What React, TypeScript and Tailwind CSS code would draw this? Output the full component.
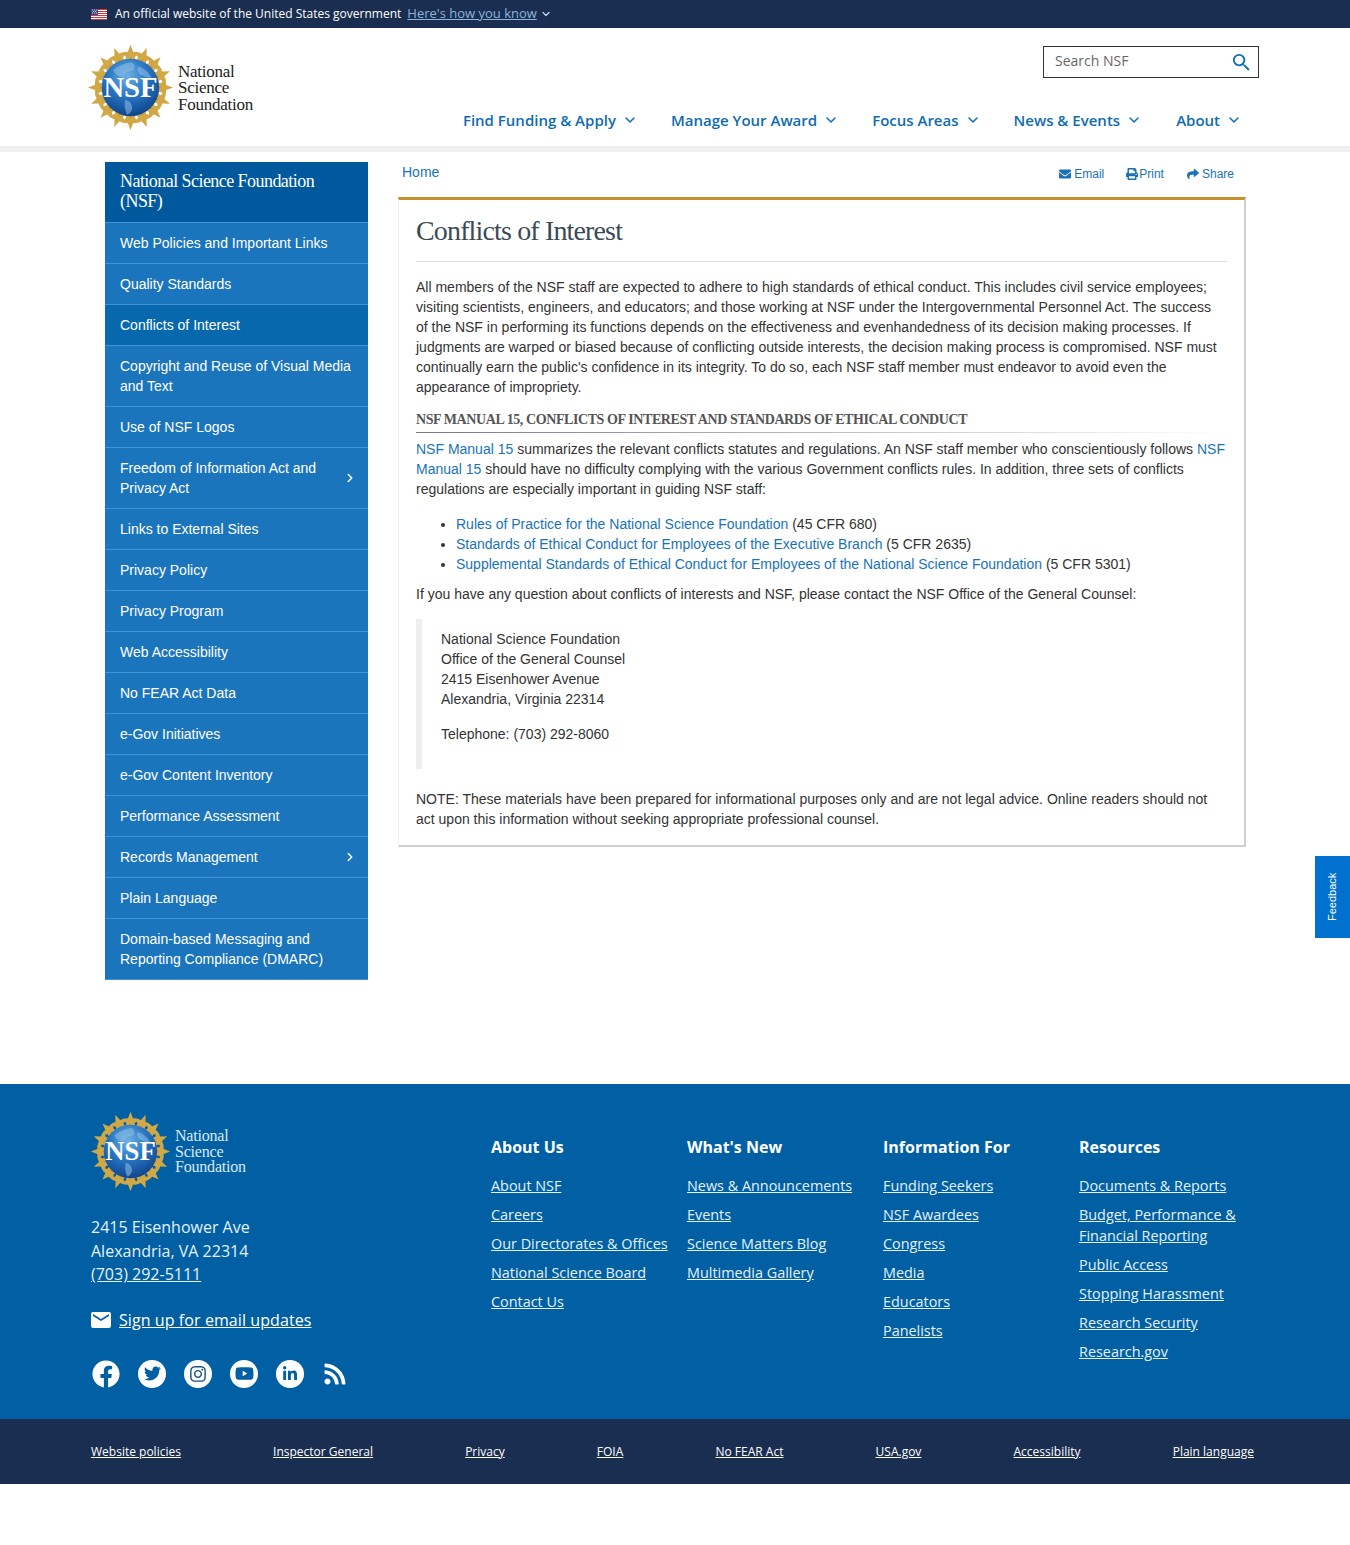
import { ChevronDown, ChevronRight } from "lucide-react";
import { FaEnvelope, FaFacebook, FaInstagram, FaLinkedinIn, FaPrint, FaRss, FaShare, FaTwitter, FaYoutube } from "react-icons/fa";
import { MdMail, MdSearch } from "react-icons/md";

const sans = "font-['Liberation_Sans',Arial,sans-serif]";
const open = "font-['Open_Sans',sans-serif]";
const serif = "font-['Liberation_Serif','Times_New_Roman',serif]";
const link = "text-[#1a73b8]";

const navItems = ["Find Funding & Apply", "Manage Your Award", "Focus Areas", "News & Events", "About"];

const sideItems: { label: string; active?: boolean; arrow?: boolean }[] = [
  { label: "Web Policies and Important Links" },
  { label: "Quality Standards" },
  { label: "Conflicts of Interest", active: true },
  { label: "Copyright and Reuse of Visual Media and Text" },
  { label: "Use of NSF Logos" },
  { label: "Freedom of Information Act and Privacy Act", arrow: true },
  { label: "Links to External Sites" },
  { label: "Privacy Policy" },
  { label: "Privacy Program" },
  { label: "Web Accessibility" },
  { label: "No FEAR Act Data" },
  { label: "e-Gov Initiatives" },
  { label: "e-Gov Content Inventory" },
  { label: "Performance Assessment" },
  { label: "Records Management", arrow: true },
  { label: "Plain Language" },
  { label: "Domain-based Messaging and Reporting Compliance (DMARC)" },
];

const footerCols: { title: string; links: string[] }[] = [
  { title: "About Us", links: ["About NSF", "Careers", "Our Directorates & Offices", "National Science Board", "Contact Us"] },
  { title: "What's New", links: ["News & Announcements", "Events", "Science Matters Blog", "Multimedia Gallery"] },
  { title: "Information For", links: ["Funding Seekers", "NSF Awardees", "Congress", "Media", "Educators", "Panelists"] },
  {
    title: "Resources",
    links: ["Documents & Reports", "Budget, Performance & Financial Reporting", "Public Access", "Stopping Harassment", "Research Security", "Research.gov"],
  },
];

const bottomLinks = ["Website policies", "Inspector General", "Privacy", "FOIA", "No FEAR Act", "USA.gov", "Accessibility", "Plain language"];

const starAngles = Array.from({ length: 16 }, (_, i) => i * 22.5);

const Seal = ({ id, className }: { id: string; className: string }) => (
  <svg viewBox="0 0 100 100" className={className} aria-hidden>
    <defs>
      <radialGradient id={id} cx="45%" cy="30%" r="75%">
        <stop offset="0%" stopColor="#6fb1e4" />
        <stop offset="45%" stopColor="#2a78c4" />
        <stop offset="100%" stopColor="#0b3f86" />
      </radialGradient>
    </defs>
    {starAngles.map((a) => (
      <g key={a} transform={`rotate(${a} 50 50)`}>
        <polygon points="50,1 53,9 61,10 55,15 57,23 50,19 43,23 45,15 39,10 47,9" fill="#d1a846" />
        <line x1="50" y1="15" x2="50" y2="22" stroke="#c99a3a" strokeWidth="2" />
      </g>
    ))}
    <circle cx="50" cy="50" r="33" fill={`url(#${id})`} />
    <path d="M30 30 q10 -8 22 -9 q6 6 0 10 q-8 0 -10 6 q-8 2 -12 -7z M58 26 q10 2 16 12 q-6 2 -10 -2 q-6 0 -6 -10z M44 64 q8 2 8 10 q-2 6 -6 7 q-4 -8 -2 -17z" fill="#8fc0e8" opacity="0.55" />
    <text x="50" y="61" textAnchor="middle" fill="#ffffff" fontSize="33" fontWeight="700" fontFamily="'Liberation Serif', serif">
      NSF
    </text>
  </svg>
);

const Flag = () => (
  <svg viewBox="0 0 16 11" className="h-[11px] w-4" aria-hidden>
    <rect width="16" height="11" fill="#ffffff" />
    <path d="M0 0h16v1H0zM0 2h16v1H0zM0 4h16v1H0zM0 6h16v1H0zM0 8h16v1H0zM0 10h16v1H0z" fill="#d0393c" />
    <rect width="7" height="6" fill="#3b4a86" />
    <path d="M1 1h1M3 1h1M5 1h1M2 2.5h1M4 2.5h1M1 4h1M3 4h1M5 4h1" stroke="#ffffff" strokeWidth="0.7" />
  </svg>
);

const Header = () => (
  <header>
    <div className="flex h-7 items-center bg-[#1a2e51] pl-[91px]">
      <Flag />
      <span className={`${open} ml-2 text-xs text-white`}>An official website of the United States government</span>
      <a className={`${open} ml-[6px] text-[13px] text-[#8db4d9] underline`}>Here's how you know</a>
      <ChevronDown className="ml-[3px] size-[12px] text-[#c5d6e6]" strokeWidth={2.5} />
    </div>
    <div className="flex h-[118px] justify-between pl-[87px] pr-[91px]">
      <div className="flex items-center gap-[4px]">
        <Seal id="sealTop" className="size-[87px]" />
        <div className={`${serif} mt-[3px] text-[17px] leading-[16.5px] tracking-[-0.25px] text-[#222222]`}>
          National
          <br />
          Science
          <br />
          Foundation
        </div>
      </div>
      <div className="flex flex-col items-end">
        <div className="mt-[18px] flex h-8 w-[216px] items-center justify-between border border-[#333333] pl-[11px] pr-[5px]">
          <span className={`${open} mt-[-2px] text-sm text-[#666666]`}>Search NSF</span>
          <MdSearch className="size-[23px] text-[#0f6fb8]" />
        </div>
        <nav className="mr-[17px] mt-[32px] flex gap-[33px]">
          {navItems.map((item) => (
            <a key={item} className={`${open} flex items-center gap-[6px] text-[15px] font-semibold leading-5 text-[#0f6cb0] ${item === "About" ? "ml-px" : ""}`}>
              {item}
              <ChevronDown className="size-4" strokeWidth={2.25} />
            </a>
          ))}
        </nav>
      </div>
    </div>
    <div className="h-[6px] bg-[#f0f0f0]" />
  </header>
);

const Sidebar = () => (
  <aside className="w-[263px] shrink-0">
    <div className={`${serif} border-b border-[#3f94d6] bg-[#00599c] px-[15px] pb-[11px] pt-[9px] text-[18px] leading-5 tracking-[-0.55px] text-white`}>
      National Science Foundation (NSF)
    </div>
    {sideItems.map((item) => (
      <a
        key={item.label}
        className={`${sans} flex items-center justify-between border-b border-[#3f94d6] py-[10px] pl-[15px] pr-[11px] text-sm leading-5 text-white ${
          item.active ? "bg-[#0868ae]" : "bg-[#1b75bc]"
        }`}
      >
        <span className={item.arrow ? "w-[210px]" : ""}>{item.label}</span>
        {item.arrow && <ChevronRight className="size-[14px]" strokeWidth={2.5} />}
      </a>
    ))}
  </aside>
);

const Article = () => (
  <main className={`${sans} ml-[30px] w-[848px] text-sm leading-5 text-[#333333]`}>
    <div className="flex h-[35px] items-start justify-between">
      <a className={`${link} ml-1 leading-5`}>Home</a>
      <div className="mr-3 mt-[2px] flex gap-[22px] text-xs leading-5 text-[#1a73b8]">
        <span className="flex items-center gap-[3px]">
          <FaEnvelope className="size-3" /> Email
        </span>
        <span className="flex items-center gap-px">
          <FaPrint className="size-3" /> Print
        </span>
        <span className="ml-px flex items-center gap-[3px]">
          <FaShare className="size-3" /> Share
        </span>
      </div>
    </div>
    <article className="border-l border-t-[3px] border-r-2 border-b-2 border-l-[#eeeeee] border-r-[#cfcfcf] border-b-[#cfcfcf] border-t-[#c98f28] px-[17px] pb-[16px]">
      <h1 className={`${serif} border-b border-[#dddddd] pb-[14px] pt-[15px] text-[28px] leading-[32px] tracking-[-0.85px] text-[#3a4a55]`}>
        Conflicts of Interest
      </h1>
      <p className="mt-[15px] pr-px">
        All members of the NSF staff are expected to adhere to high standards of ethical conduct. This includes civil service employees; visiting scientists, engineers, and educators; and those working at NSF under the Intergovernmental Personnel Act. The success of the NSF in performing its functions depends on the effectiveness and evenhandedness of its decision making processes. If judgments are warped or biased because of conflicting outside interests, the decision making process is compromised. NSF must continually earn the public's confidence in its integrity. To do so, each NSF staff member must endeavor to avoid even the appearance of impropriety.
      </p>
      <h4 className={`${serif} mt-[13px] text-sm font-bold uppercase leading-5 tracking-[-0.41px] text-[#555555]`}>
        NSF Manual 15, Conflicts of Interest and Standards of Ethical Conduct
      </h4>
      <div className="mt-[2px] h-px bg-linear-to-r from-[#777788] to-transparent" />
      <p className="mt-[6px]">
        <a className={link}>NSF Manual 15</a> summarizes the relevant conflicts statutes and regulations. An NSF staff member who conscientiously follows <a className={link}>NSF Manual 15</a> should have no difficulty complying with the various Government conflicts rules. In addition, three sets of conflicts regulations are especially important in guiding NSF staff:
      </p>
      <ul className="mt-[15px] list-disc pl-10">
        <li>
          <a className={link}>Rules of Practice for the National Science Foundation</a> (45 CFR 680)
        </li>
        <li>
          <a className={link}>Standards of Ethical Conduct for Employees of the Executive Branch</a> (5 CFR 2635)
        </li>
        <li>
          <a className={link}>Supplemental Standards of Ethical Conduct for Employees of the National Science Foundation</a> (5 CFR 5301)
        </li>
      </ul>
      <p className="mt-[10px]">If you have any question about conflicts of interests and NSF, please contact the NSF Office of the General Counsel:</p>
      <blockquote className="mt-[15px] border-l-[6px] border-[#eeeeee] pb-[25px] pl-[19px] pt-[10px]">
        <p>
          National Science Foundation
          <br />
          Office of the General Counsel
          <br />
          2415 Eisenhower Avenue
          <br />
          Alexandria, Virginia 22314
        </p>
        <p className="mt-[15px]">Telephone: (703) 292-8060</p>
      </blockquote>
      <p className="mt-5">
        NOTE: These materials have been prepared for informational purposes only and are not legal advice. Online readers should not act upon this information without seeking appropriate professional counsel.
      </p>
    </article>
  </main>
);

const socialCircle = "flex size-7 items-center justify-center rounded-full bg-white";

const Footer = () => (
  <footer className={open}>
    <div className="flex h-[335px] bg-[#0060a3] pl-[91px] text-white">
      <div className="w-[400px] shrink-0 pt-[27px]">
        <div className="flex items-center gap-[4px]">
          <Seal id="sealFoot" className="ml-[-1px] size-[81px]" />
          <div className={`${serif} text-[16px] leading-[15.5px] tracking-[-0.2px] text-[#dbe9f5]`}>
            National
            <br />
            Science
            <br />
            Foundation
          </div>
        </div>
        <div className="mt-[24px] text-base leading-[23.5px] text-[#e6f1fa]">
          2415 Eisenhower Ave
          <br />
          Alexandria, VA 22314
          <br />
          <a className="underline">(703) 292-5111</a>
        </div>
        <div className="mt-[21px] flex items-center gap-[6px]">
          <MdMail className="ml-[-2px] size-6" />
          <a className="text-base tracking-[0.08px] underline">Sign up for email updates</a>
        </div>
        <div className="ml-px mt-[28px] flex items-center gap-[18px]">
          <span className="flex size-7 items-center justify-center">
            <FaFacebook className="size-7" />
          </span>
          <span className={socialCircle}>
            <FaTwitter className="size-[17px] text-[#0060a3]" />
          </span>
          <span className={socialCircle}>
            <FaInstagram className="size-[18px] text-[#1a4f7a]" />
          </span>
          <span className={socialCircle}>
            <FaYoutube className="size-[19px] text-[#0060a3]" />
          </span>
          <span className={socialCircle}>
            <FaLinkedinIn className="size-4 text-[#0060a3]" />
          </span>
          <FaRss className="ml-px size-6" />
        </div>
      </div>
      <div className="flex pt-[52px]">
        {footerCols.map((col) => (
          <div key={col.title} className="w-[196px] pr-3">
            <h3 className="text-base font-bold leading-[22px]">{col.title}</h3>
            <ul className="mt-[17px] flex flex-col gap-2">
              {col.links.map((item) => (
                <li key={item} className="text-[14.4px] leading-[21px] text-[#e6f1fa]">
                  <a className="underline">{item}</a>
                </li>
              ))}
            </ul>
          </div>
        ))}
      </div>
    </div>
    <div className="flex h-[65px] items-center justify-between bg-[#1a2e51] pl-[91px] pr-[96px]">
      {bottomLinks.map((item) => (
        <a key={item} className="text-xs text-white underline">
          {item}
        </a>
      ))}
    </div>
  </footer>
);

const App = () => (
  <div className="relative min-h-[1545px] bg-white">
    <Header />
    <div className="flex h-[932px] items-start pl-[105px] pt-[10px]">
      <Sidebar />
      <Article />
    </div>
    <Footer />
    <a className={`${sans} absolute right-0 top-[856px] flex h-[82px] w-[35px] rotate-180 items-center justify-center bg-[#0071ce] text-[11px] text-white [writing-mode:vertical-rl]`}>
      Feedback
    </a>
  </div>
);

export default App;
